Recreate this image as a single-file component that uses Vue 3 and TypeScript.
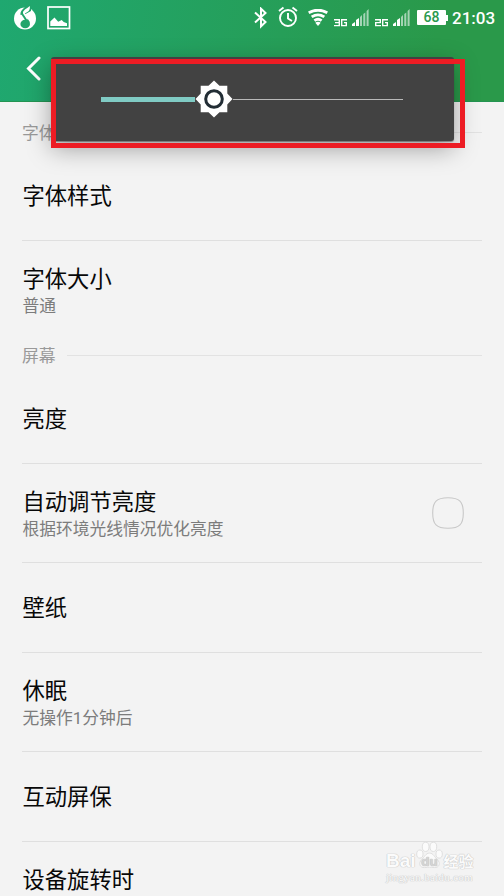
<script setup lang="ts">
interface Row {
  title: string
  note?: string
  check?: boolean
}
interface Section {
  label: string
  rows: Row[]
}

const sections: Section[] = [
  { label: '字体', rows: [{ title: '字体样式' }, { title: '字体大小', note: '普通' }] },
  {
    label: '屏幕',
    rows: [
      { title: '亮度' },
      { title: '自动调节亮度', note: '根据环境光线情况优化亮度', check: true },
      { title: '壁纸' },
      { title: '休眠', note: '无操作1分钟后' },
      { title: '互动屏保' },
      { title: '设备旋转时' },
    ],
  },
]
const networks: string[] = ['3G', '2G']
</script>

<template>
  <div class="screen">
    <header class="header">
      <div class="status">
        <svg class="music" width="24" height="26" viewBox="0 0 24 26">
          <circle cx="12" cy="14.500" r="11" fill="#fff" />
          <path d="M7.500 11C7 6 11 5 12.500 2L18 0v7L12.500 10z" fill="#22a56c" />
          <path d="M9.500 9.500 15.700 19" fill="none" stroke="#22a56c" stroke-width="3" />
          <ellipse cx="12.200" cy="20" rx="4.800" ry="4.300" fill="#22a56c" />
          <path d="M10 9.500C9.500 6 13.500 5 16.800 2 17.300 6.500 15.500 7.700 12 9.200L15.200 15 14 15.500z" fill="#fff" />
        </svg>
        <svg class="picture" width="24" height="24" viewBox="0 0 24 24">
          <rect x="1" y="1" width="21.500" height="21.500" fill="none" stroke="#fff" stroke-width="1.700" />
          <path d="M3.300 20v-4.500L7.500 11.500l3.700 4.200 3.500-1.600 2 1.900 3.300 1.200V20z" fill="#fff" />
        </svg>
        <span class="grow"></span>
        <svg class="bluetooth" width="14" height="22" viewBox="0 0 14 22">
          <path d="M1 5.500l10.500 9.500L7 19.300V1.700l4.500 4.300L1 15.500" fill="none" stroke="#fff" stroke-width="2" />
        </svg>
        <svg class="alarm" width="20" height="22" viewBox="0 0 20 22">
          <g fill="none" stroke="#fff" stroke-width="1.900">
            <circle cx="10" cy="12" r="8" />
            <path d="M10 7v5.500l4 2.500M1 5l4.500-3.500M19 5l-4.500-3.500" />
          </g>
        </svg>
        <svg class="wifi" width="20" height="18" viewBox="0 0 20 18">
          <g fill="none" stroke="#fff" stroke-width="2.900">
            <path d="M.7 3.700Q10-1.300 19.300 3.700" />
            <path d="M3.700 7.900Q10 3.800 16.300 7.900" />
            <path d="M6.400 11.600Q10 9 13.600 11.600" />
          </g>
          <path d="M7.300 13.700Q10 12 12.700 13.700L10 17z" fill="#fff" />
        </svg>
        <div v-for="n in networks" :key="n" class="network">
          <svg class="kind" width="13" height="8" viewBox="0 0 13 8">
            <g fill="none" stroke="#fff" stroke-width="1.400">
              <path v-if="n === '3G'" d="M0 .7H5.300V6.600H0M1 3.600H5.300" />
              <path v-else d="M0 .7H5.300V3.600H.7V6.600H6" />
              <path d="M13 .7H7.700V6.600H12.300V3.600H10" />
            </g>
          </svg>
          <svg width="17" height="17" viewBox="0 0 17 17">
            <path d="M0 17v-2l3-2v4z M4 17v-6l3-2v8z" fill="#fff" />
            <path d="M8 17V8l2-2v11z M11.300 17V5l2-1.500V17z M14.600 17V2L16.600 0V17z" fill="#fff" opacity=".58" />
          </svg>
        </div>
        <div class="battery">68</div>
        <div class="clock">21:03</div>
      </div>
      <svg class="back" width="15" height="25" viewBox="0 0 15 25">
        <path d="M13 2 2.500 12.500 13 23" fill="none" stroke="#fff" stroke-width="3" stroke-linecap="round" />
      </svg>
    </header>

    <main class="list">
      <section v-for="s in sections" :key="s.label">
        <div class="label"><span>{{ s.label }}</span></div>
        <div v-for="r in s.rows" :key="r.title" class="row" :class="{ double: r.note }">
          <div class="texts">
            <div class="title">{{ r.title }}</div>
            <div v-if="r.note" class="note">{{ r.note }}</div>
          </div>
          <svg v-if="r.check" class="check" width="32" height="32" viewBox="0 0 32 32">
            <path d="M16 .7C27.500.7 31.300 4.500 31.300 16S27.500 31.300 16 31.300.7 27.500.7 16 4.500.7 16 .7z" fill="none" stroke="#c8c8c8" stroke-width="1.100" />
          </svg>
        </div>
      </section>
    </main>

    <div class="panel">
      <div class="fill"></div>
      <svg class="thumb" width="38" height="38" viewBox="-19 -19 38 38">
        <path d="M0-18.500 5.500-13.300H13.300V-5.500L18.500 0 13.300 5.500V13.300H5.500L0 18.500-5.500 13.300H-13.300V5.500L-18.500 0-13.300-5.500V-13.300H-5.500z" fill="#fff" />
        <circle r="8.300" fill="none" stroke="#222d35" stroke-width="3" />
      </svg>
      <div class="rest"></div>
    </div>
    <div class="frame"></div>

    <div class="watermark">
      <div class="brand">
        <span>Bai</span>
        <svg width="27" height="30" viewBox="0 0 28 30">
          <g fill="#fbfbfb" stroke="#dedede" stroke-width="1">
            <ellipse cx="4" cy="13" rx="3.300" ry="4.200" />
            <ellipse cx="10" cy="5.500" rx="3.500" ry="4.800" />
            <ellipse cx="18" cy="5.500" rx="3.500" ry="4.800" />
            <ellipse cx="24" cy="13" rx="3.300" ry="4.200" />
            <path d="M14 12c4 0 5 4 8 6.500 4 4 2 9-3 8.500-4-.5-6-.5-10 0-5 .5-7-4.500-3-8.500C9 16 10 12 14 12z" />
          </g>
          <text x="14" y="25" text-anchor="middle" class="du">du</text>
        </svg>
        <span class="jy">经验</span>
      </div>
      <div class="site">jingyan.baidu.com</div>
    </div>
  </div>
</template>

<style>
body {
  margin: 0;
  overflow: hidden;
}
</style>

<style scoped>
.screen {
  position: relative;
  width: 504px;
  height: 896px;
  overflow: hidden;
  background: #f3f3f3;
  font-family: Roboto, 'Noto Sans CJK SC', sans-serif;
}
.header {
  box-sizing: border-box;
  height: 102px;
  background: linear-gradient(100deg, #1fa870 0%, #269e58 55%, #2a994a 85%);
  border-bottom: 1px solid #249452;
}
.status {
  display: flex;
  align-items: flex-start;
  height: 56px;
}
.status svg { flex: none; }
.music { margin: 4px 0 0 13px; }
.picture { margin: 6px 0 0 10px; }
.grow { flex: 1; }
.bluetooth { margin: 7px 10px 0 0; }
.alarm { margin: 6px 10px 0 0; }
.wifi { margin: 9px 6px 0 0; }
.network {
  display: flex;
  align-items: flex-end;
  gap: 5px;
  margin: 9px 6px 0 0;
}
.kind { margin-bottom: -1px; }
.battery {
  position: relative;
  width: 29px;
  height: 15px;
  margin: 10px 6px 0 1px;
  border-radius: 1px;
  background: #fff;
  color: #29994e;
  font: 500 14px/15px Roboto, sans-serif;
  text-align: center;
}
.battery::after {
  content: '';
  position: absolute;
  left: 29px;
  top: 5px;
  width: 2px;
  height: 6px;
  background: #fff;
}
.clock {
  width: 52px;
  margin-top: 8px;
  color: #fff;
  font: 500 17px/20px Roboto, sans-serif;
}
.back {
  display: block;
  margin-left: 26px;
}
.label {
  display: flex;
  align-items: center;
  gap: 11px;
  height: 34px;
  margin: 0 22px;
  color: #999;
  font-size: 16.800px;
  line-height: 32px;
}
.label span {
  margin-top: -2px;
}
section:first-child .label { margin-top: 15px; }
.label::after {
  content: '';
  flex: 1;
  height: 1px;
  margin-top: -3px;
  background: #e2e2e2;
}
.row {
  display: flex;
  align-items: center;
  box-sizing: border-box;
  height: 90px;
  margin: 0 22px;
  border-bottom: 1px solid #dfdfdf;
}
.row.double {
  height: 99px;
  padding-top: 1px;
}
.row:last-child {
  height: 75px;
  border-bottom: 0;
}
section:first-child .row:last-child {
  height: 99px;
  padding-top: 0;
}
.texts {
  flex: 1;
  padding-left: .5px;
}
.title {
  color: #080808;
  font-size: 22.300px;
  line-height: 30px;
}
.note {
  color: #7c7c7c;
  font-size: 16.750px;
  line-height: 24px;
}
.check { margin: -2px 18px 0 0; }
.panel {
  position: absolute;
  left: 51px;
  top: 57px;
  display: flex;
  align-items: center;
  box-sizing: border-box;
  width: 403px;
  height: 84px;
  padding: 0 51px 0 50px;
  border-radius: 3px;
  background: #424242;
  box-shadow: 0 1px 1px rgba(0, 0, 0, .35), 0 8px 24px rgba(0, 0, 0, .34);
}
.fill {
  width: 94px;
  height: 5px;
  background: #80cbc4;
}
.thumb {
  flex: none;
}
.rest {
  flex: 1;
  height: 1px;
  background: #b9b9b9;
}
.frame {
  position: absolute;
  left: 51px;
  top: 59px;
  box-sizing: border-box;
  width: 414px;
  height: 89px;
  border: 5px solid #ed1c24;
}
.watermark {
  position: absolute;
  left: 386px;
  top: 841px;
  width: 100px;
  color: #fbfbfb;
  white-space: nowrap;
  text-shadow: 0 0 1px #c4c4c4, 0 0 1px #c8c8c8, 0 0 1px #d4d4d4;
}
.brand {
  display: flex;
  align-items: flex-end;
  height: 30px;
  font: 700 19px/20px 'Liberation Sans', sans-serif;
}
.brand svg {
  flex: none;
}
.brand .jy {
  margin-left: 1px;
  font: 700 15px/20px 'Noto Sans CJK SC', sans-serif;
}
.du {
  fill: #d4d4d4;
  font: 700 14px 'Liberation Sans', sans-serif;
}
.site {
  font: 11px/13px 'Liberation Serif', serif;
  letter-spacing: .3px;
}
</style>
